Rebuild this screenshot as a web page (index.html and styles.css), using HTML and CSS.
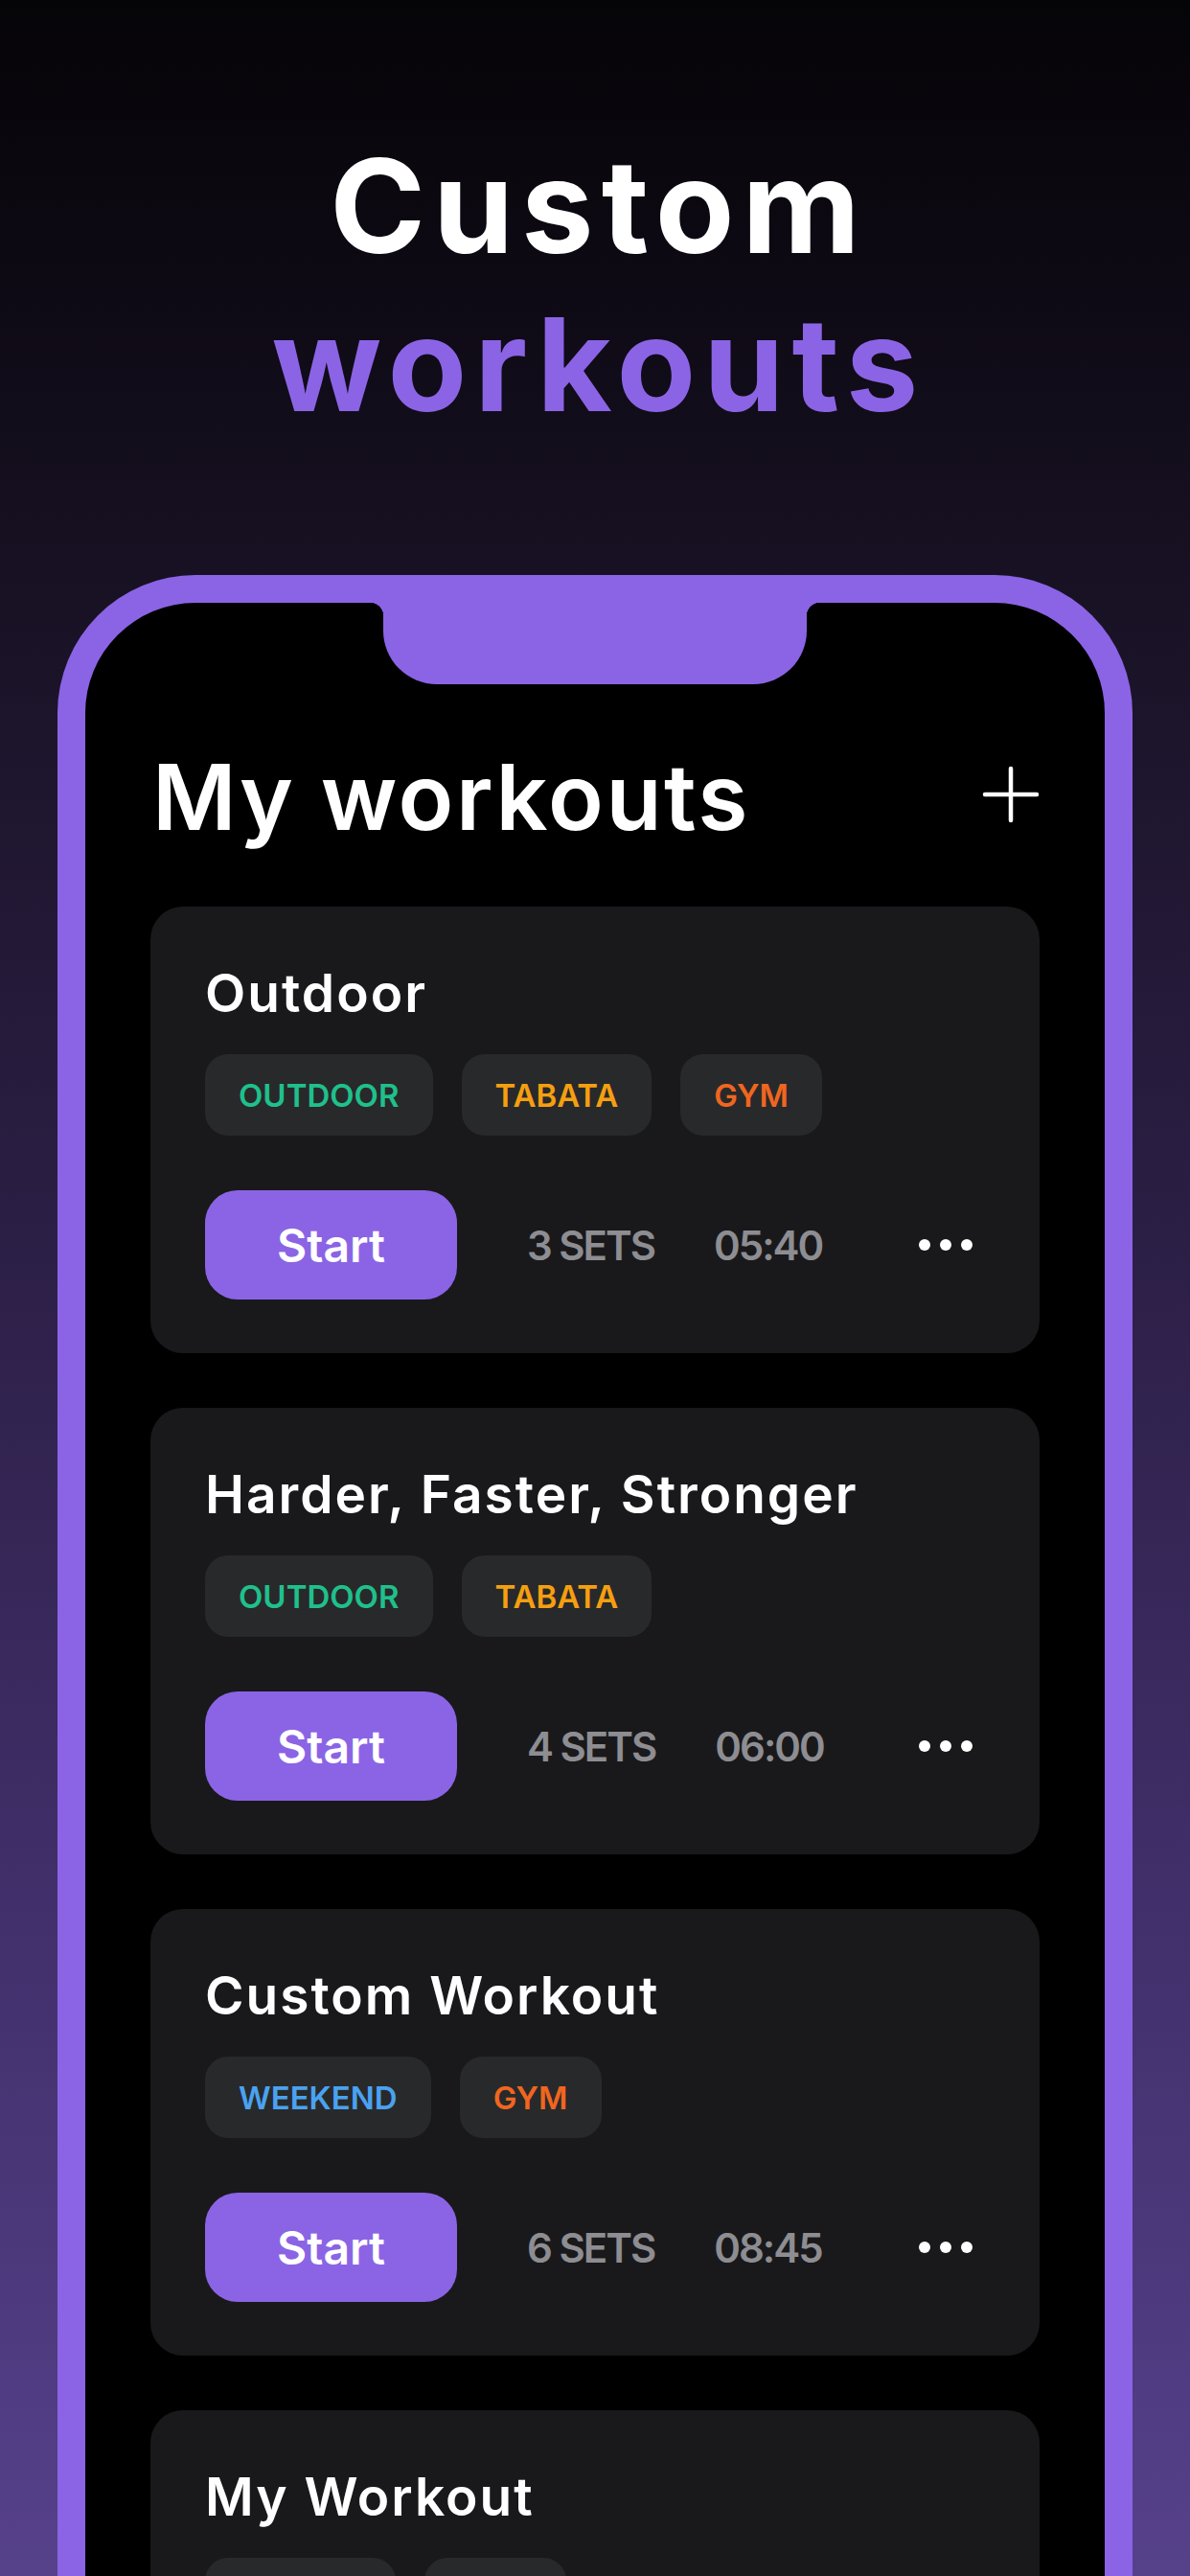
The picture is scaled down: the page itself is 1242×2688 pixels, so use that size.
FILE: index.html
```html
<!DOCTYPE html>
<html lang="en">
<head>
    <meta charset="UTF-8">
    <meta name="viewport" content="width=device-width, initial-scale=1.0">
    <title>Custom workouts</title>
    <link rel="stylesheet" href="styles.css">
</head>
<body>

    <div class="hero">
        <h1>Custom<br><span class="accent">workouts</span></h1>
    </div>

    <div class="phone">
        <div class="notch"></div>
        <div class="screen">

            <div class="screen-head">
                <h2>My workouts</h2>
                <svg class="plus" width="60" height="60" viewBox="0 0 60 60">
                    <path d="M30 3 V57 M3 30 H57" stroke="#fff" stroke-width="4.5" stroke-linecap="round" fill="none"/>
                </svg>
            </div>

            <div class="card">
                <h3>Outdoor</h3>
                <div class="tags">
                    <span class="tag green">OUTDOOR</span>
                    <span class="tag yellow">TABATA</span>
                    <span class="tag orange">GYM</span>
                </div>
                <div class="card-foot">
                    <button class="start">Start</button>
                    <span class="sets">3 SETS</span>
                    <span class="time">05:40</span>
                    <span class="more"><i></i><i></i><i></i></span>
                </div>
            </div>

            <div class="card">
                <h3>Harder, Faster, Stronger</h3>
                <div class="tags">
                    <span class="tag green">OUTDOOR</span>
                    <span class="tag yellow">TABATA</span>
                </div>
                <div class="card-foot">
                    <button class="start">Start</button>
                    <span class="sets">4 SETS</span>
                    <span class="time">06:00</span>
                    <span class="more"><i></i><i></i><i></i></span>
                </div>
            </div>

            <div class="card">
                <h3>Custom Workout</h3>
                <div class="tags">
                    <span class="tag blue">WEEKEND</span>
                    <span class="tag orange">GYM</span>
                </div>
                <div class="card-foot">
                    <button class="start">Start</button>
                    <span class="sets">6 SETS</span>
                    <span class="time">08:45</span>
                    <span class="more"><i></i><i></i><i></i></span>
                </div>
            </div>

            <div class="card">
                <h3>My Workout</h3>
                <div class="tags">
                    <span class="tag yellow">TABATA</span>
                    <span class="tag orange">GYM</span>
                </div>
                <div class="card-foot">
                    <button class="start">Start</button>
                    <span class="sets">5 SETS</span>
                    <span class="time">04:30</span>
                    <span class="more"><i></i><i></i><i></i></span>
                </div>
            </div>

        </div>
    </div>

</body>
</html>
```

FILE: styles.css
```css
body {
    margin: 0;
    height: 2688px;
    overflow: hidden;
    font-family: Inter, "Noto Sans", sans-serif;
    color: #fff;
    background: linear-gradient(180deg, #050407 0%, #110c19 15%, #1a1327 25%, #2b1e44 47%, #3f2e68 72%, #56418b 100%);
}

.hero {
    padding-top: 133px;
    padding-left: 8px;
    text-align: center;
}

.hero h1 {
    margin: 0;
    font-size: 135px;
    line-height: 165px;
    font-weight: 700;
    letter-spacing: 8px;
}

.accent {
    color: #8b64e5;
}

.phone {
    position: relative;
    margin: 137px 60px 0;
    border: 29px solid #8b64e5;
    border-bottom: none;
    border-radius: 144px 144px 0 0;
    background: #000;
    height: 2100px;
}

.notch {
    position: absolute;
    top: 0;
    left: 311px;
    width: 442px;
    height: 85px;
    background: #8b64e5;
    border-radius: 0 0 56px 56px;
}

.notch::before,
.notch::after {
    content: "";
    position: absolute;
    top: 0;
    width: 14px;
    height: 14px;
}

.notch::before {
    left: -14px;
    background: radial-gradient(circle at 0 100%, transparent 14px, #8b64e5 14.5px);
}

.notch::after {
    right: -14px;
    background: radial-gradient(circle at 100% 100%, transparent 14px, #8b64e5 14.5px);
}

.screen {
    padding: 145px 68px 0;
}

.screen-head {
    display: flex;
    align-items: center;
    justify-content: space-between;
    padding: 0 0 0 2px;
}

.screen-head h2 {
    margin: 0;
    font-size: 95px;
    line-height: 116px;
    font-weight: 600;
    letter-spacing: 2.5px;
}

.plus {
    display: block;
    margin-top: -6px;
}

.card {
    margin-top: 56px;
    padding: 55px 57px 56px;
    background: #19191b;
    border-radius: 34px;
}

.card + .card {
    margin-top: 57px;
}

.card h3 {
    margin: 0;
    font-size: 55px;
    line-height: 70px;
    font-weight: 600;
    letter-spacing: 2px;
}

.tags {
    display: flex;
    gap: 30px;
    margin-top: 29px;
}

.tag {
    height: 85px;
    display: flex;
    align-items: center;
    padding: 0 35px;
    background: #28292b;
    border-radius: 24px;
    font-size: 33px;
    font-weight: 600;
}

.green { color: #1fc08b; }
.yellow { color: #f59f10; }
.orange { color: #f0661f; }
.blue { color: #4aa2f0; }

.card-foot {
    display: flex;
    align-items: center;
    margin-top: 57px;
}

.start {
    width: 263px;
    height: 114px;
    border: none;
    border-radius: 34px;
    background: #8b64e5;
    color: #fff;
    font-family: inherit;
    font-size: 48px;
    font-weight: 600;
}

.sets,
.time {
    font-size: 42px;
    font-weight: 600;
    color: #8d8d92;
    letter-spacing: -2px;
}

.sets {
    margin-left: 73px;
}

.time {
    margin-left: 62px;
}

.more {
    display: flex;
    gap: 10px;
    margin-left: auto;
    margin-right: 13px;
}

.more i {
    width: 12px;
    height: 12px;
    border-radius: 50%;
    background: #fff;
}
```
